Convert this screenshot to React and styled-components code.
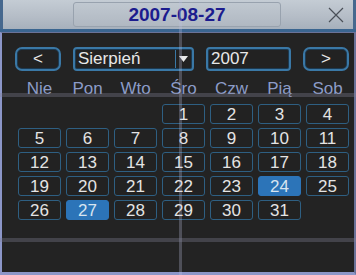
import React from 'react';
import styled, { createGlobalStyle } from 'styled-components';

const GlobalStyle = createGlobalStyle`
  html, body {
    margin: 0;
    padding: 0;
    background: #232323;
  }
  body {
    font-family: "Liberation Sans", Arial, sans-serif;
  }
`;

const weekdays = ['Nie', 'Pon', 'Wto', 'Śro', 'Czw', 'Pią', 'Sob'];
const firstOffset = 3;
const daysInMonth = 31;
const highlighted = [24, 27];

function App() {
    const cells = [];
    for (let i = 0; i < firstOffset; i++) cells.push(null);
    for (let d = 1; d <= daysInMonth; d++) cells.push(d);

    return (
        <>
            <GlobalStyle />
            <Window>
                <TitleBar>
                    <TitleBox>2007-08-27</TitleBox>
                    <Close>
                        <svg width="16" height="16" viewBox="0 0 16 16">
                            <path d="M1 1 L15 15 M15 1 L1 15" stroke="#4a5058" strokeWidth="1.2" fill="none" />
                        </svg>
                    </Close>
                </TitleBar>
                <Divider />
                <Body>
                    <NavRow>
                        <NavButton>&lt;</NavButton>
                        <Select>
                            <span>Sierpień</span>
                            <Arrow>
                                <svg width="9" height="6" viewBox="0 0 9 6">
                                    <path d="M0 0 L9 0 L4.5 6 Z" fill="#e8e8e8" />
                                </svg>
                            </Arrow>
                        </Select>
                        <YearBox>2007</YearBox>
                        <NavButton>&gt;</NavButton>
                    </NavRow>
                    <Weekdays>
                        {weekdays.map((w) => (
                            <Weekday key={w}>{w}</Weekday>
                        ))}
                    </Weekdays>
                    <Days>
                        {cells.map((d, i) =>
                            d === null ? (
                                <Empty key={'e' + i} />
                            ) : (
                                <Day key={d} selected={highlighted.includes(d)}>{d}</Day>
                            )
                        )}
                    </Days>
                </Body>
                <VLine />
                <HLine top={93} />
                <HLine top={238} />
            </Window>
        </>
    );
}

const Window = styled.div`
    position: relative;
    width: 356px;
    height: 275px;
    display: flex;
    flex-direction: column;
    overflow: hidden;
`;

const TitleBar = styled.div`
    height: 29px;
    display: flex;
    align-items: center;
    background: linear-gradient(#c4ccd4, #b4bcc6 60%, #a6b0bc);
    border-left: 3px solid #46688e;
    border-right: 3px solid #46688e;
`;

const TitleBox = styled.div`
    margin-left: 70px;
    width: 206px;
    height: 23px;
    display: flex;
    align-items: center;
    justify-content: center;
    border: 1px solid #98a2ae;
    border-radius: 3px;
    background: linear-gradient(#c0c8d0, #b0b8c2);
    color: #1c1c8e;
    font-weight: 700;
    font-size: 19px;
`;

const Close = styled.div`
    margin-left: 47px;
    display: flex;
    align-items: center;
`;

const Divider = styled.div`
    height: 3px;
    background: #3a6590;
`;

const Body = styled.div`
    flex: 1;
    background: #232323;
    border-top: 1px solid #6a7298;
    border-left: 2px solid #8c96c8;
    border-right: 2px solid #6a7298;
    border-bottom: 3px solid #8c96c8;
    padding: 14px 0 0 13px;
`;

const NavRow = styled.div`
    display: flex;
    align-items: center;
    gap: 12px;
    height: 24px;
`;

const boxBorder = `
    box-sizing: border-box;
    height: 24px;
    border: 2px solid #3a78a6;
    box-shadow: inset 0 0 0 1px #1c3a52;
    background: #222222;
    color: #e8e8e8;
    font-size: 17px;
`;

const NavButton = styled.div`
    ${boxBorder}
    width: 46px;
    border-radius: 7px;
    display: flex;
    align-items: center;
    justify-content: center;
    font-size: 17px;
`;

const Select = styled.div`
    ${boxBorder}
    width: 121px;
    border-radius: 4px;
    display: flex;
    align-items: center;
    justify-content: space-between;
    padding-left: 3px;
`;

const Arrow = styled.div`
    width: 14px;
    height: 18px;
    margin-right: 2px;
    border-left: 1px solid #3a78a6;
    display: flex;
    align-items: center;
    justify-content: center;
`;

const YearBox = styled.div`
    ${boxBorder}
    width: 85px;
    border-radius: 4px;
    display: flex;
    align-items: center;
    padding-left: 3px;
`;

const Weekdays = styled.div`
    display: grid;
    grid-template-columns: repeat(7, 43px);
    column-gap: 5px;
    margin-top: 6px;
    margin-left: 3px;
    height: 24px;
    align-items: center;
`;

const Weekday = styled.div`
    text-align: center;
    color: #8c9cc8;
    font-size: 17px;
`;

const Days = styled.div`
    display: grid;
    grid-template-columns: repeat(7, 43px);
    grid-auto-rows: 20px;
    column-gap: 5px;
    row-gap: 4px;
    margin-top: 3px;
    margin-left: 3px;
`;

const Empty = styled.div``;

const Day = styled.div`
    box-sizing: border-box;
    border: 1px solid ${(p) => (p.selected ? '#2c74b8' : '#2e5f82')};
    border-radius: 3px;
    background: ${(p) => (p.selected ? '#2c74b8' : '#222222')};
    color: ${(p) => (p.selected ? '#d8e4f0' : '#e4e4e4')};
    font-size: 17px;
    display: flex;
    align-items: center;
    justify-content: center;
    line-height: 1;
`;

const VLine = styled.div`
    position: absolute;
    left: 179px;
    top: 0;
    width: 3px;
    height: 100%;
    background: rgba(190, 195, 225, 0.28);
    pointer-events: none;
`;

const HLine = styled.div`
    position: absolute;
    left: 0;
    top: ${(p) => p.top}px;
    width: 100%;
    height: 4px;
    background: rgba(130, 130, 150, 0.35);
    pointer-events: none;
`;

export default App;
